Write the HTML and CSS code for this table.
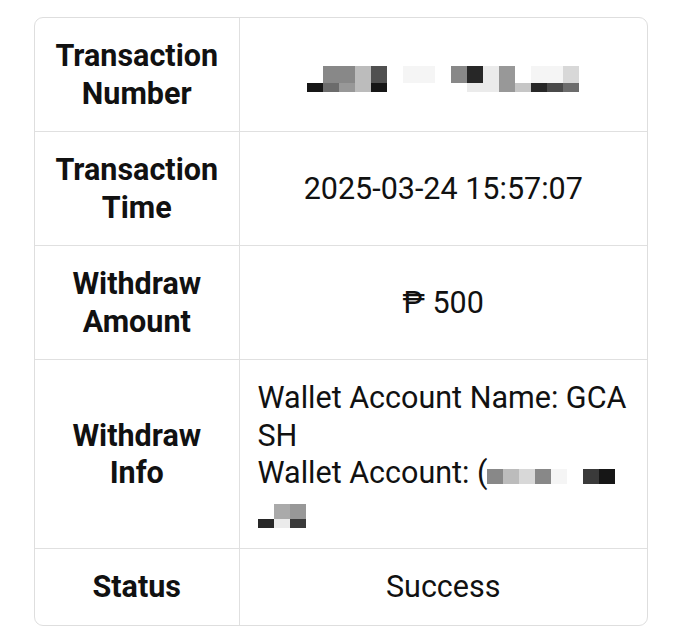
FILE: index.html
```
<!DOCTYPE html>
<html lang="en">
<head>
    <meta charset="UTF-8">
    <meta name="viewport" content="width=device-width, initial-scale=1.0">
    <title>Withdraw Details</title>
    <link rel="stylesheet" href="styles.css">
</head>
<body>
    <!-- Withdraw record -->
    <div class="detalhe">
        <table class="tabela">
            <colgroup>
                <col class="col-rotulo">
                <col>
            </colgroup>
            <tr>
                <th>Transaction Number</th>
                <td>
                    <span class="mosaico num">
                        <i></i><i class="c8"></i><i class="c8"></i><i class="cb"></i><i class="c5"></i><i></i><i class="cf"></i><i class="cf"></i><i></i><i class="c8"></i><i class="c2"></i><i class="ce"></i><i class="c9"></i><i></i><i class="cf"></i><i class="cf"></i><i class="cd"></i>
                        <i class="c1"></i><i class="c6"></i><i class="c9"></i><i class="cb"></i><i class="c1"></i><i></i><i></i><i></i><i></i><i></i><i class="ce"></i><i class="ce"></i><i class="c9"></i><i class="cc"></i><i class="c2"></i><i class="c4"></i><i class="c6"></i>
                    </span>
                </td>
            </tr>
            <tr>
                <th>Transaction Time</th>
                <td>2025-03-24 15:57:07</td>
            </tr>
            <tr>
                <th>Withdraw Amount</th>
                <td>₱ 500</td>
            </tr>
            <tr>
                <th>Withdraw Info</th>
                <td class="info">Wallet Account Name: GCASH<br>Wallet Account: (<span class="mosaico conta"><i class="c8"></i><i class="cb"></i><i class="cd"></i><i class="c8"></i><i class="cf"></i><i></i><i class="c3"></i><i class="c1"></i></span><br><span class="mosaico resto"><i></i><i class="ca"></i><i class="c9"></i><i class="c2"></i><i class="ce"></i><i class="c3"></i></span></td>
            </tr>
            <tr>
                <th>Status</th>
                <td>Success</td>
            </tr>
        </table>
    </div>
</body>
</html>
```
FILE: styles.css
```
body{ margin: 0; background: #fff; font-family: Roboto, "Liberation Sans", sans-serif; color: #111;}
.detalhe{ width: 614px; margin: 17px 0 0 34px; border: 1px solid #dedede; border-radius: 9px; overflow: hidden; box-sizing: border-box;}
.tabela{ width: 100%; table-layout: fixed; border-collapse: collapse; font-size: 30.5px; line-height: 37.5px;}
.col-rotulo{ width: 204px;}
.tabela th, .tabela td{ border: 1px solid #e0e0e0; padding: 19px 18px; text-align: center; vertical-align: middle;}
.tabela tr:first-child th, .tabela tr:first-child td{ border-top: none;}
.tabela tr:last-child th, .tabela tr:last-child td{ border-bottom: none;}
.tabela th{ border-left: none; font-weight: 700; padding: 19px 18px;}
.tabela td{ border-right: none; font-weight: 400;}
.tabela .info{ text-align: left; word-break: break-all;}

/* blurred blocks */
.mosaico{ display: inline-grid; vertical-align: middle;}
.mosaico i{ display: block; background: #fff;}
.num{ grid-template-columns: repeat(17, 16px); grid-template-rows: 17px 9px; margin-top: 4px;}
.conta{ grid-template-columns: repeat(8, 16px); grid-template-rows: 15px; vertical-align: -1px;}
.resto{ grid-template-columns: repeat(3, 16px); grid-template-rows: 15px 9px; margin-top: 7px;}
.c1{ background: #161616 !important;}
.c2{ background: #272727 !important;}
.c3{ background: #3a3a3a !important;}
.c4{ background: #4a4a4a !important;}
.c5{ background: #505050 !important;}
.c6{ background: #6c6c6c !important;}
.c8{ background: #888 !important;}
.c9{ background: #989898 !important;}
.ca{ background: #aaa !important;}
.cb{ background: #bcbcbc !important;}
.cc{ background: #c6c6c6 !important;}
.cd{ background: #d8d8d8 !important;}
.ce{ background: #ebebeb !important;}
.cf{ background: #f5f5f5 !important;}
```
